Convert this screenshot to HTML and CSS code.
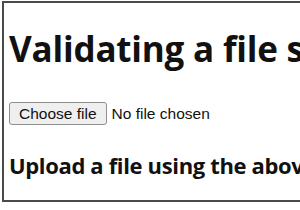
FILE: index.html
```html
<!DOCTYPE html>
<html>
<head>
<meta charset="utf-8">
<link rel="stylesheet" href="styles.css">
</head>
<body>
<div class="frame">
  <h1 class="title">Validating a file size</h1>
  <div class="picker">
    <span class="btn">Choose file</span>
    <span class="status">No file chosen</span>
  </div>
  <h3 class="hint">Upload a file using the above input</h3>
</div>
</body>
</html>
```
FILE: styles.css
```css
html, body {
  margin: 0;
  padding: 0;
  background: #fff;
  overflow: hidden;
  width: 300px;
  height: 210px;
}
.frame {
  margin: 1px 0 0 2px;
  width: 400px;
  height: 201px;
  border: 2px solid #4a4a4a;
  border-right: none;
  box-sizing: border-box;
  padding: 0 0 0 5px;
  font-family: "Open Sans", sans-serif;
  color: #111;
}
.title {
  margin: 0;
  padding-top: 22px;
  font-size: 35px;
  font-weight: 700;
  line-height: 48px;
  white-space: nowrap;
  letter-spacing: -0.2px;
}
.picker {
  display: flex;
  align-items: center;
  gap: 5px;
  margin-top: 29px;
  font-family: "Liberation Sans", Arial, sans-serif;
  font-size: 15.5px;
}
.btn {
  display: inline-block;
  box-sizing: border-box;
  height: 23px;
  line-height: 21px;
  padding: 0 9px;
  border: 1px solid #8f8f8f;
  border-radius: 3px;
  background: #efefef;
  color: #111;
}
.status {
  color: #111;
}
.hint {
  margin: 0;
  padding-top: 25px;
  font-size: 22px;
  font-weight: 700;
  line-height: 30px;
  white-space: nowrap;
  letter-spacing: -0.35px;
}
```
